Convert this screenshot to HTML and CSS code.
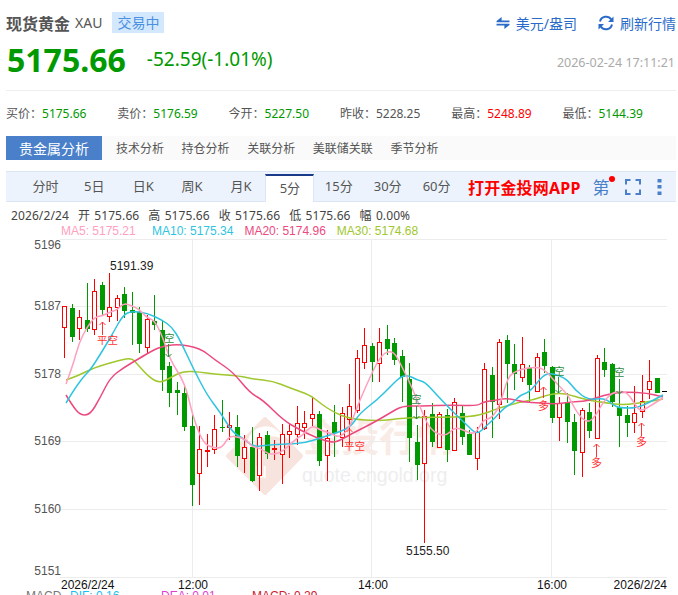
FILE: index.html
```html
<!DOCTYPE html>
<html lang="zh-CN">
<head>
  <meta charset="UTF-8">
  <title>现货黄金 XAU</title>
  <link rel="stylesheet" href="styles.css">
</head>
<body>
  <div class="top-row">
    <div class="title">现货黄金</div>
    <div class="code">XAU</div>
    <div class="status">交易中</div>
    <div class="actions">
      <a class="action">
        <svg class="action-icon" width="14" height="12" viewBox="0 0 15 13"><path d="M6 0 L0.5 4.3 V5.8 H14.5 V3.8 H6 Z M9 13 L14.5 8.7 V7.2 H0.5 V9.2 H9 Z" fill="#2a6bc9"/></svg>
        美元/盎司
      </a>
      <a class="action">
        <svg class="action-icon" width="16" height="16" viewBox="0 0 16 16"><path d="M2 6.5 A6.2 6.2 0 0 1 13.2 4.5" fill="none" stroke="#2a6bc9" stroke-width="2"/><path d="M14 9.5 A6.2 6.2 0 0 1 2.8 11.5" fill="none" stroke="#2a6bc9" stroke-width="2"/><path d="M15.5 1.5 V7 H10 Z M0.5 14.5 V9 H6 Z" fill="#2a6bc9"/></svg>
        刷新行情
      </a>
    </div>
  </div>

  <div class="price-row">
    <div class="price">5175.66</div>
    <div class="change">-52.59(-1.01%)</div>
    <div class="date">2026-02-24 17:11:21</div>
  </div>

  <div class="quotes">
    <div class="quote">买价：<span class="down">5175.66</span></div>
    <div class="quote">卖价：<span class="down">5176.59</span></div>
    <div class="quote">今开：<span class="down">5227.50</span></div>
    <div class="quote">昨收：<span>5228.25</span></div>
    <div class="quote">最高：<span class="up">5248.89</span></div>
    <div class="quote">最低：<span class="down">5144.39</span></div>
  </div>

  <div class="tabs">
    <div class="tab active">贵金属分析</div>
    <div class="tab">技术分析</div>
    <div class="tab">持仓分析</div>
    <div class="tab">关联分析</div>
    <div class="tab">美联储关联</div>
    <div class="tab">季节分析</div>
  </div>

  <div class="periods">
    <div class="period">分时</div>
    <div class="period">5日</div>
    <div class="period">日K</div>
    <div class="period">周K</div>
    <div class="period">月K</div>
    <div class="period active">5分</div>
    <div class="period">15分</div>
    <div class="period">30分</div>
    <div class="period">60分</div>
    <div class="app-link">打开金投网APP</div>
    <div class="tool-draw">第<span class="red-dot"></span></div>
    <svg class="tool-full" width="16" height="16" viewBox="0 0 16 16"><path d="M1 5.5 V1 H5.5 M10.5 1 H15 V5.5 M15 10.5 V15 H10.5 M5.5 15 H1 V10.5" fill="none" stroke="#4a7fc9" stroke-width="2"/></svg>
    <svg class="tool-more" width="5" height="16" viewBox="0 0 5 16"><path d="M0.5 0 H4.5 V3.5 H0.5 Z M0.5 6 H4.5 V9.5 H0.5 Z M0.5 12.5 H4.5 V16 H0.5 Z" fill="#4a7fc9"/></svg>
  </div>

  <div class="ohlc">
    <span>2026/2/24</span>
    <span>开 5175.66</span>
    <span>高 5175.66</span>
    <span>收 5175.66</span>
    <span>低 5175.66</span>
    <span>幅 0.00%</span>
  </div>
  <div class="legend">
    <span class="ma5">MA5: 5175.21</span>
    <span class="ma10">MA10: 5175.34</span>
    <span class="ma20">MA20: 5174.96</span>
    <span class="ma30">MA30: 5174.68</span>
  </div>

  <svg id="chart" class="chart" width="678" height="361" viewBox="0 239 678 361"></svg>

  <script src="chart.js"></script>
</body>
</html>
```

FILE: styles.css
```css
html, body {
  height: 595px;
  overflow: hidden;
}
body {
  margin: 0;
  background: #fff;
  font-family: "Noto Sans", "Noto Sans CJK SC", sans-serif;
  font-size: 12px;
  color: #555;
}
.top-row {
  display: flex;
  align-items: center;
  height: 21px;
  padding: 12px 2px 0 6px;
}
.title {
  font-size: 16px;
  font-weight: bold;
  color: #555;
}
.code {
  font-size: 14px;
  margin-left: 5px;
  color: #555;
}
.status {
  font-size: 14px;
  line-height: 21px;
  margin-left: 10px;
  padding: 0 5px;
  background: #d3e8fd;
  color: #4a90e2;
}
.actions {
  display: flex;
  align-items: center;
  margin-left: auto;
  gap: 21px;
}
.action {
  display: flex;
  align-items: center;
  gap: 6px;
  font-size: 14px;
  color: #2a6bc9;
}
.price-row {
  display: flex;
  align-items: center;
  height: 36px;
  margin-top: 8px;
  padding: 0 3px 0 7px;
}
.price {
  font-size: 32px;
  font-weight: bold;
  color: #009900;
}
.change {
  font-size: 19px;
  margin-left: 21px;
  color: #009900;
}
.date {
  font-size: 12.5px;
  margin-left: auto;
  padding-top: 6px;
  color: #aaa;
}
.quotes {
  display: grid;
  grid-template-columns: repeat(6, 111.3px);
  margin: 13px 2px 0 6px;
  padding-top: 14px;
  border-top: 1px solid #eee;
  line-height: 18px;
}
.down { color: #009900; }
.up { color: #ff0000; }
.tabs {
  display: flex;
  align-items: center;
  height: 24px;
  margin: 13px 2px 0 6px;
  background: #fafafa;
}
.tab {
  margin-left: 17.6px;
}
.tab.active {
  display: flex;
  align-items: center;
  height: 24px;
  margin: 0 -3.6px 0 0;
  padding: 0 13px;
  font-size: 14px;
  background: #4a7fc9;
  color: #fff;
}
.periods {
  display: flex;
  align-items: center;
  box-sizing: border-box;
  height: 31px;
  margin: 11px 2px 0 6px;
  padding-left: 15px;
  background: #edf3fc;
  border-top: 1px solid #dce5f3;
  border-bottom: 1px solid #dce5f3;
}
.period {
  width: 48.9px;
  font-size: 13px;
  line-height: 29px;
  text-align: center;
}
.period.active {
  align-self: flex-end;
  box-sizing: border-box;
  height: 28px;
  margin-bottom: -1px;
  line-height: 25px;
  background: #fff;
  border-top: 2px solid #1a3a8a;
  border-left: 1px solid #dce5f3;
  border-right: 1px solid #dce5f3;
}
.app-link {
  margin-left: 7px;
  font-size: 16px;
  font-weight: bold;
  letter-spacing: 0.2px;
  color: #ff0000;
}
.tool-draw {
  position: relative;
  margin-left: 12px;
  font-size: 17px;
  color: #4a7fc9;
}
.red-dot {
  position: absolute;
  top: 2px;
  right: -5px;
  width: 6px;
  height: 6px;
  border-radius: 50%;
  background: #ff0000;
}
.tool-full {
  margin-left: 15px;
}
.tool-more {
  margin-left: 16px;
}
.ohlc {
  display: flex;
  gap: 9px;
  height: 16px;
  line-height: 16px;
  margin: 6px 0 0 11px;
  letter-spacing: 0.1px;
  word-spacing: 1px;
  color: #444;
}
.legend {
  display: flex;
  gap: 11px;
  height: 15px;
  line-height: 15px;
  margin-left: 61px;
  font-family: "Liberation Sans", sans-serif;
}
.ma5 { color: #ffa0c0; width: 80px; }
.ma10 { color: #2ec4e0; }
.ma20 { color: #ec4a7f; }
.ma30 { color: #a0c72e; }
.chart {
  display: block;
  font-family: "Liberation Sans", "Noto Sans CJK SC", sans-serif;
}
```

FILE: chart.js
```js
// candles: [type, body top, body bottom, wick top, wick bottom]
// r = hollow red, g = filled green. y values are page pixels.
var candles = [
  ['r',306,327,306,358],['g',308,337,304,342],['r',317,328,310,340],['g',320,329,283,332],
  ['r',291,329,279,335],['g',285,310,282,315],['r',307,316,273,322],['r',298,307,295,321],
  ['g',294,311,287,318],['g',310,313,292,345],['g',312,344,307,353],['r',319,347,315,353],
  ['g',321,325,295,330],['g',330,370,320,391],['g',366,393,362,407],['g',390,393,382,415],
  ['g',393,427,385,431],['g',426,485,415,506],['r',449,473,426,505],['r',450,450,434,467],
  ['r',429,449,415,454],['g',427,427,400,432],['r',425,427,412,440],['g',427,456,415,467],
  ['r',447,458,435,473],['g',447,481,427,482],['r',437,475,433,491],['g',435,454,431,459],
  ['r',448,449,440,460],['r',434,454,424,484],['r',431,434,424,458],['r',423,434,406,445],
  ['r',423,427,411,439],['r',414,418,397,426],['g',414,461,411,466],['r',438,455,430,481],
  ['g',422,433,405,457],['r',413,437,407,447],['r',406,419,384,445],['r',358,410,350,413],
  ['r',345,362,328,369],['g',346,362,343,382],['r',342,363,328,382],['g',339,349,325,355],
  ['g',343,360,338,365],['g',356,377,350,402],['g',379,438,363,462],['g',442,465,425,480],
  ['r',416,463,410,543],['g',414,442,403,447],['r',414,447,412,448],['g',415,450,409,462],
  ['r',402,450,398,451],['g',413,437,405,445],['g',434,455,430,455],['r',432,458,427,470],
  ['r',369,428,363,430],['g',375,402,367,438],['r',342,404,339,419],['g',340,364,335,403],
  ['g',364,374,344,390],['r',364,377,337,382],['g',368,385,365,402],['r',357,391,353,392],
  ['g',352,366,339,373],['g',367,418,366,423],['r',403,417,397,441],['g',402,422,393,443],
  ['g',422,451,414,475],['r',410,452,408,477],['g',412,431,403,438],['r',358,438,355,439],
  ['g',362,370,348,377],['g',364,402,363,407],['g',407,416,390,447],['g',415,423,406,437],
  ['r',413,422,386,433],['r',401,411,375,418],['r',381,389,360,399],['g',378,393,378,393]
];

var ma5 = [[66,384],[73,365],[79,343],[87,327],[95,317],[102,316],[110,312],[117,310],[124,303],[132,306],[139,309],[147,318],[154,320],[162,335],[170,360],[185,383],[193,417],[203,443],[213,448],[222,448],[229,436],[238,437],[247,440],[252,447],[260,448],[268,454],[275,454],[282,452],[297,438],[303,435],[312,425],[320,430],[330,433],[340,438],[350,427],[357,407],[370,377],[380,357],[388,351],[395,353],[402,367],[410,383],[420,407],[430,430],[445,437],[455,427],[463,430],[475,435],[483,420],[492,418],[500,405],[507,380],[513,372],[530,367],[543,368],[552,378],[560,387],[568,395],[577,413],[587,423],[595,417],[603,402],[612,393],[620,391],[628,393],[637,408],[642,411],[650,406],[663,398]];
var ma10 = [[66,403],[75,388],[85,375],[91,369],[103,350],[113,333],[123,315],[132,311],[147,313],[162,320],[172,327],[180,340],[193,368],[207,395],[220,412],[233,433],[243,438],[253,447],[267,445],[287,444],[305,443],[320,438],[330,435],[350,428],[360,413],[377,400],[390,387],[400,377],[408,375],[417,380],[425,382],[435,393],[453,412],[467,425],[477,435],[487,425],[493,420],[505,407],[513,403],[520,395],[530,392],[543,375],[552,373],[567,379],[575,390],[588,400],[605,398],[613,405],[620,408],[637,408],[650,402],[663,395]];
var ma20 = [[66,395],[72,405],[80,415],[90,415],[100,398],[110,378],[123,368],[140,358],[150,352],[160,347],[177,344],[200,348],[215,360],[233,372],[250,393],[263,400],[283,420],[300,430],[317,438],[330,442],[337,442],[353,433],[373,423],[390,413],[402,406],[420,406],[453,405],[477,406],[483,402],[497,400],[507,398],[523,402],[540,403],[557,404],[570,402],[587,401],[595,398],[613,393],[627,392],[647,393],[663,397]];
var ma30 = [[66,380],[80,375],[93,368],[120,360],[132,358],[138,365],[150,378],[160,383],[170,378],[183,371],[200,372],[213,374],[240,376],[253,379],[273,381],[290,388],[310,395],[320,403],[333,412],[350,419],[380,421],[403,418],[437,417],[470,417],[487,413],[493,410],[520,402],[533,400],[547,395],[560,393],[570,395],[587,400],[607,403],[623,405],[647,402],[663,399]];

var chart = document.getElementById('chart');
var html = '';

function line(x1, y1, x2, y2, color) {
  html += '<line x1="' + x1 + '" y1="' + y1 + '" x2="' + x2 + '" y2="' + y2 + '" stroke="' + color + '"/>';
}

function text(x, y, str, color, size, anchor, extra) {
  html += '<text x="' + x + '" y="' + y + '" fill="' + color + '" font-size="' + size + '" text-anchor="' + (anchor || 'start') + '"' + (extra || '') + '>' + str + '</text>';
}

// rounds the corners a little, the lines in the chart are smoothed
function curve(points, color) {
  var d = 'M' + points[0].join(' ');
  for (var i = 1; i < points.length - 1; i++) {
    var mx = (points[i][0] + points[i + 1][0]) / 2;
    var my = (points[i][1] + points[i + 1][1]) / 2;
    d += ' Q' + points[i].join(' ') + ' ' + mx + ' ' + my;
  }
  d += ' L' + points[points.length - 1].join(' ');
  html += '<path d="' + d + '" fill="none" stroke-width="1.5" stroke="' + color + '"/>';
}

// watermark
html += '<path d="M265 419 L301 456 L265 493 L228 456 Z" fill="#f8e4de" stroke="#f8e4de" stroke-width="4" stroke-linejoin="round"/>';
html += '<path d="M248 450 A18 18 0 0 1 284 440 A22 22 0 0 0 250 462 Z" fill="#fff"/>';
text(255, 478, 'u', '#fff', 22);
text(303, 451, '金投行情', '#f9ebe6', 38, 'start', ' font-weight="bold"');
text(302, 482, 'quote.cngold.org', '#eeeeee', 19.5);

// grid
[239.5, 306.5, 374.5, 441.5, 509.5, 577.5].forEach(function (y) {
  line(60, y, 667, y, '#ececec');
});
[192.5, 371.5, 551.5].forEach(function (x) {
  line(x, 239.5, x, 577.5, '#ececec');
});

// price labels
[[5196, 249], [5187, 310], [5178, 378], [5169, 445], [5160, 513], [5151, 575]].forEach(function (l) {
  text(61, l[1], l[0], '#555', 12, 'end');
});

// candles
candles.forEach(function (c, i) {
  var x = Math.round(64 + 7.5 * i) + 0.5;
  var color = c[0] == 'r' ? '#ff0000' : '#009900';
  line(x, c[3], x, c[4], color);
  var h = c[2] - c[1];
  if (c[0] == 'r') {
    html += '<rect x="' + (x - 2) + '" y="' + (c[1] + 0.5) + '" width="4" height="' + Math.max(h, 1) + '" fill="#fff" stroke="' + color + '"/>';
  } else {
    html += '<rect x="' + (x - 2.5) + '" y="' + c[1] + '" width="5" height="' + Math.max(h, 1) + '" fill="' + color + '"/>';
  }
});

// moving averages
curve(ma30, '#a0c72e');
curve(ma20, '#ec4a7f');
curve(ma10, '#2ec4e0');
curve(ma5, '#ffa0c0');

// high/low and last price
text(110, 270, '5191.39', '#222', 12);
text(406, 555, '5155.50', '#222', 12);
line(662, 391.5, 667, 391.5, '#000');

// trade signals
function arrow(x, y1, y2, color) {
  var d = y2 < y1 ? 3 : -3;
  html += '<path d="M' + x + ' ' + y1 + ' V' + y2 + ' M' + (x - 3) + ' ' + (y2 + d) + ' L' + x + ' ' + y2 + ' L' + (x + 3) + ' ' + (y2 + d) + '" fill="none" stroke="' + color + '"/>';
}
arrow(102.5, 335, 322, '#ff3333');
text(97, 344, '平空', '#ff3333', 10.5);
arrow(349.5, 441, 429, '#ff3333');
text(344, 450, '平空', '#ff3333', 10.5);
[[168.5, 164, 342, 344, 357], [416.5, 411, 403, 406, 419], [558.5, 554, 375, 377, 393], [619.5, 614, 376, 379, 394]].forEach(function (s) {
  text(s[1], s[2], '空', '#2e8b40', 10.5);
  arrow(s[0], s[3], s[4], '#2e8b40');
});
[[543.5, 398, 387, 538, 410], [596.5, 457, 444, 591, 467], [641.5, 436, 423, 636, 446]].forEach(function (s) {
  arrow(s[0], s[1], s[2], '#ff3333');
  text(s[3], s[4], '多', '#ff3333', 11);
});

// time axis
[[61, '2026/2/24', 'start'], [193, '12:00', 'middle'], [373, '14:00', 'middle'], [552, '16:00', 'middle'], [667, '2026/2/24', 'end']].forEach(function (l) {
  text(l[0], 589, l[1], '#111', 12, l[2]);
});

// macd legend, cut off by the window
text(26, 600, 'MACD', '#777', 12);
text(70, 600, 'DIF: 0.16', '#18c0f0', 12);
text(161, 600, 'DEA: 0.01', '#e040d0', 12);
text(252, 600, 'MACD: 0.29', '#d02030', 12);

chart.innerHTML = html;
```
